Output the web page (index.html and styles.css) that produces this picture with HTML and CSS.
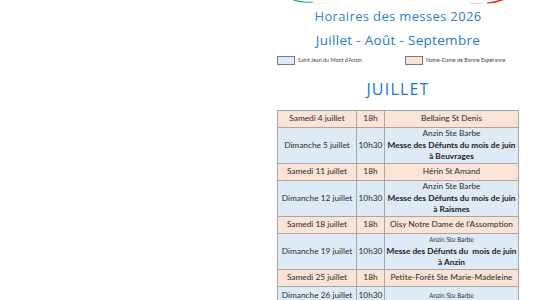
FILE: index.html
```html
<!DOCTYPE html>
<html lang="fr">
<head>
<meta charset="utf-8">
<title>Horaires des messes 2026</title>
<link rel="stylesheet" href="styles.css">
</head>
<body>
<div class="page">
  <svg class="logo" width="256" height="6" viewBox="0 0 256 6" aria-hidden="true">
    <path d="M22 0 Q31 3.6 43 2.6 L43 1.8 Q32 2 26 0 Z" fill="#1a9a7c"/>
    <path d="M30 3.2 Q50 3.6 70 3" stroke="#d9eee8" stroke-width="0.6" fill="none"/>
    <path d="M217 3.6 Q226 3.4 234 0 L229 0 Q224 2 217 2.4 Z" fill="#e52521"/>
    <path d="M200 3.4 Q206 3.6 212 3.4" stroke="#f3b8b8" stroke-width="0.8" fill="none"/>
  </svg>
  <h1 class="title">Horaires des messes 2026</h1>
  <h2 class="subtitle">Juillet - Août - Septembre</h2>
  <div class="legend">
    <div class="legend-item"><span class="swatch swatch-blue"></span><span>Saint Jean du Mont d’Anzin</span></div>
    <div class="legend-item"><span class="swatch swatch-peach"></span><span>Notre-Dame de Bonne Espérance</span></div>
  </div>
  <h3 class="month">JUILLET</h3>
  <table class="schedule">
    <colgroup><col class="c-day"><col class="c-time"><col class="c-place"></colgroup>
    <tr class="sat"><td>Samedi 4 juillet</td><td>18h</td><td>Bellaing St Denis</td></tr>
    <tr class="sun"><td>Dimanche 5 juillet</td><td>10h30</td><td>Anzin Ste Barbe<br><b>Messe des Défunts du mois de juin<br>à Beuvrages</b></td></tr>
    <tr class="sat"><td>Samedi 11 juillet</td><td>18h</td><td>Hérin St Amand</td></tr>
    <tr class="sun"><td>Dimanche 12 juillet</td><td>10h30</td><td>Anzin Ste Barbe<br><b>Messe des Défunts du mois de juin<br>à Raismes</b></td></tr>
    <tr class="sat"><td>Samedi 18 juillet</td><td>18h</td><td>Oisy Notre Dame de l’Assomption</td></tr>
    <tr class="sun sun-short"><td>Dimanche 19 juillet</td><td>10h30</td><td><span class="narrow">Anzin Ste Barbe</span><br><b>Messe des Défunts du&nbsp; mois de juin<br>à Anzin</b></td></tr>
    <tr class="sat"><td>Samedi 25 juillet</td><td>18h</td><td>Petite-Forêt Ste Marie-Madeleine</td></tr>
    <tr class="sun sun-last"><td>Dimanche 26 juillet</td><td>10h30</td><td><span class="narrow">Anzin Ste Barbe</span></td></tr>
  </table>
</div>
</body>
</html>
```

FILE: styles.css
```css
html, body {
  margin: 0;
  padding: 0;
  background: #ffffff;
}

.page {
  margin-left: 270px;
  width: 256px;
  display: flex;
  flex-direction: column;
  align-items: center;
  font-family: "Open Sans", sans-serif;
}

.logo {
  display: block;
  align-self: stretch;
}

.title {
  margin: 1px 0 0;
  font-size: 13px;
  line-height: 18px;
  font-weight: 400;
  color: #2a7fd2;
  letter-spacing: 0.35px;
}

.subtitle {
  margin: 6px 0 0;
  font-size: 13.5px;
  line-height: 18px;
  font-weight: 500;
  color: #1f78cf;
  letter-spacing: 0.3px;
}

.legend {
  align-self: stretch;
  display: grid;
  grid-template-columns: 128px auto;
  padding-left: 7px;
  margin-top: 7px;
  font-family: "Lato", sans-serif;
  color: #444;
}

.legend-item {
  display: flex;
  align-items: center;
  gap: 3px;
  font-size: 5.4px;
  line-height: 9px;
}

.swatch {
  width: 16px;
  height: 7px;
  border: 1px solid #7a7a7a;
}

.swatch-blue { background: #dde9f7; }
.swatch-peach { background: #fbe3d3; }

.month {
  margin: 14px 0 0;
  font-size: 16px;
  line-height: 20px;
  font-weight: 400;
  color: #1a76d0;
  letter-spacing: 1.2px;
}

.schedule {
  margin-top: 11px;
  width: 241px;
  border-collapse: collapse;
  table-layout: fixed;
  font-family: "Lato", sans-serif;
  font-size: 8.3px;
  color: #2a2a2a;
  text-align: center;
}

.c-day { width: 79px; }
.c-time { width: 28px; }
.c-place { width: 134px; }

.schedule td {
  border: 1px solid #a6a6a6;
  padding: 0;
  vertical-align: middle;
  line-height: 11.5px;
  white-space: nowrap;
}

.schedule tr.sat { background: #fbe4d5; height: 17px; }
.schedule tr.sun { background: #deeaf6; height: 36px; }
.schedule tr.sun-short { height: 32px; }
.schedule tr.sun-last { height: 20px; }

.schedule b {
  font-weight: 700;
  color: #1a1a1a;
}

.narrow {
  font-family: "DejaVu Sans Condensed", "Liberation Sans", sans-serif;
  font-stretch: condensed;
  font-size: 6.6px;
  letter-spacing: -0.2px;
  line-height: 10px;
}
```
